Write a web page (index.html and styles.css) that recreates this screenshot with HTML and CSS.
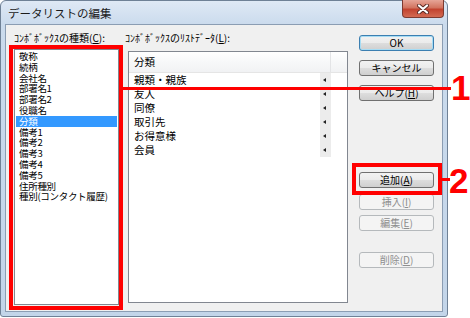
FILE: index.html
```html
<!DOCTYPE html>
<html lang="ja">
<head>
    <meta charset="UTF-8">
    <title>データリストの編集</title>
    <link rel="stylesheet" href="styles.css">
</head>
<body>
    <div class="window">
        <div class="titlebar">
            <span class="title">データリストの編集</span>
            <div class="close-btn">
                <svg width="12" height="10" viewBox="0 0 12 10">
                    <path d="M2 1.5 L10 8.5 M10 1.5 L2 8.5" stroke="#5a2a24" stroke-width="4" stroke-linecap="round"/>
                    <path d="M2 1.5 L10 8.5 M10 1.5 L2 8.5" stroke="#fff" stroke-width="2.2" stroke-linecap="round"/>
                </svg>
            </div>
        </div>

        <div class="client">
            <div class="col col-kinds">
                <div class="label">ｺﾝﾎﾞﾎﾞｯｸｽの種類(<u>C</u>):</div>
                <ul class="listbox">
                    <li>敬称</li>
                    <li>続柄</li>
                    <li>会社名</li>
                    <li>部署名1</li>
                    <li>部署名2</li>
                    <li>役職名</li>
                    <li class="selected">分類</li>
                    <li>備考1</li>
                    <li>備考2</li>
                    <li>備考3</li>
                    <li>備考4</li>
                    <li>備考5</li>
                    <li>住所種別</li>
                    <li>種別(コンタクト履歴)</li>
                </ul>
            </div>

            <div class="col col-data">
                <div class="label">ｺﾝﾎﾞﾎﾞｯｸｽのﾘｽﾄﾃﾞｰﾀ(<u>L</u>):</div>
                <div class="listview">
                    <div class="lv-header">
                        <div class="lv-head-main">分類</div>
                        <div class="lv-head-rest"></div>
                    </div>
                    <div class="lv-row"><span class="lv-text">親類・親族</span><span class="lv-arrow"></span></div>
                    <div class="lv-row"><span class="lv-text">友人</span><span class="lv-arrow"></span></div>
                    <div class="lv-row"><span class="lv-text">同僚</span><span class="lv-arrow"></span></div>
                    <div class="lv-row"><span class="lv-text">取引先</span><span class="lv-arrow"></span></div>
                    <div class="lv-row"><span class="lv-text">お得意様</span><span class="lv-arrow"></span></div>
                    <div class="lv-row"><span class="lv-text">会員</span><span class="lv-arrow"></span></div>
                </div>
            </div>

            <div class="col col-buttons">
                <button class="btn btn-default btn-ok">OK</button>
                <button class="btn btn-cancel">キャンセル</button>
                <button class="btn btn-help">ヘルプ(<u>H</u>)</button>
                <button class="btn btn-add">追加(<u>A</u>)</button>
                <button class="btn btn-insert" disabled>挿入(<u>I</u>)</button>
                <button class="btn btn-edit" disabled>編集(<u>E</u>)</button>
                <button class="btn btn-delete" disabled>削除(<u>D</u>)</button>
            </div>
        </div>
    </div>

    <!-- callout marks drawn over the dialog -->
    <div class="mark-box mark-box-1"></div>
    <div class="mark-line mark-line-1"></div>
    <div class="mark-num mark-num-1">1</div>

    <div class="mark-box mark-box-2"></div>
    <div class="mark-line mark-line-2"></div>
    <div class="mark-num mark-num-2">2</div>
</body>
</html>
```

FILE: styles.css
```css
* {
    box-sizing: border-box;
}
body {
    margin: 0;
    width: 470px;
    height: 318px;
    background: #fff;
    font-family: "Noto Sans CJK JP", "Noto Sans", sans-serif;
    color: #000;
    position: relative;
    overflow: hidden;
}
.window {
    width: 448px;
    height: 317px;
    border: 1px solid #6f8196;
    border-radius: 6px 6px 3px 3px;
    background: linear-gradient(to bottom, #dfe9f5 0, #cbdbed 23px, #c3d5e9 100%);
    display: flex;
    flex-direction: column;
}
.titlebar {
    height: 23px;
    display: flex;
    align-items: center;
    justify-content: space-between;
    padding-left: 7px;
}
.title {
    font-size: 11.5px;
    color: #1b1b1b;
}
.close-btn {
    align-self: flex-start;
    margin-top: -1px;
    margin-right: 3px;
    width: 42px;
    height: 18px;
    border: 1px solid #7d3a30;
    border-top: none;
    border-radius: 0 0 4px 4px;
    background: linear-gradient(to bottom, #e6a597 0%, #d27460 45%, #c2432f 55%, #d36a52 100%);
    display: flex;
    align-items: center;
    justify-content: center;
}
.client {
    margin: 0 4px;
    height: 288px;
    background: #f0f0f0;
    border: 1px solid #8b9db3;
    display: flex;
    padding-left: 8px;
}
.col {
    display: flex;
    flex-direction: column;
}
.col-kinds {
    width: 105px;
}
.col-data {
    width: 223px;
    margin-left: 6px;
}
.col-buttons {
    width: 75px;
    margin-left: 11px;
}
.label {
    height: 24px;
    padding-top: 5px;
    line-height: 16px;
    font-size: 10px;
    white-space: nowrap;
}
.listbox {
    list-style: none;
    margin: 0;
    padding: 1px 1px;
    height: 256px;
    background: #fff;
    border: 1px solid #828790;
    font-size: 9.5px;
    letter-spacing: -0.3px;
    overflow: hidden;
}
.listbox li {
    line-height: 10.8px;
    height: 10.8px;
    padding-left: 3px;
    white-space: nowrap;
}
.listbox li.selected {
    background: #3399ff;
    color: #fff;
}
.listview {
    margin-left: 3px;
    margin-top: 2px;
    width: 220px;
    height: 252px;
    background: #fff;
    border: 1px solid #828790;
    font-size: 10.5px;
}
.lv-header {
    display: flex;
    height: 21px;
    background: linear-gradient(to bottom, #ffffff 0%, #f7f8f9 50%, #f1f2f4 100%);
    border-bottom: 1px solid #e5e5e5;
}
.lv-head-main {
    width: 202px;
    padding-left: 5px;
    line-height: 20px;
    border-right: 1px solid #e3e4e6;
}
.lv-head-rest {
    flex: 1;
}
.lv-row {
    display: flex;
    height: 14px;
    line-height: 14px;
}
.lv-text {
    width: 191px;
    padding-left: 5px;
    white-space: nowrap;
}
.lv-arrow {
    width: 11px;
    background: #ececec;
    display: flex;
    align-items: center;
    padding-left: 3px;
}
.lv-arrow::before {
    content: "";
    border-right: 3px solid #222;
    border-top: 2.5px solid transparent;
    border-bottom: 2.5px solid transparent;
}
.btn {
    display: block;
    width: 75px;
    height: 16px;
    padding: 0;
    font-family: inherit;
    font-size: 10px;
    line-height: 14px;
    color: #000;
    border: 1px solid #707070;
    border-radius: 3px;
    background: linear-gradient(to bottom, #f2f2f2 0%, #ebebeb 48%, #dddddd 52%, #cfcfcf 100%);
}
.btn u {
    text-underline-offset: 1px;
}
.btn-default {
    border-color: #3c7fb1;
    box-shadow: inset 0 0 0 1px #a6dcf4;
}
.btn:disabled {
    color: #8e8e8e;
    border-color: #b5b9bc;
    background: #f4f4f4;
}
.btn-ok { margin-top: 10px; }
.btn-cancel { margin-top: 9px; }
.btn-help { margin-top: 9px; }
.btn-add { margin-top: 71px; }
.btn-insert { margin-top: 6px; }
.btn-edit { margin-top: 5px; }
.btn-delete { margin-top: 21px; }

.mark-box {
    position: absolute;
    border: 4px solid #f00;
}
.mark-box-1 {
    left: 9px;
    top: 45px;
    width: 114px;
    height: 265px;
}
.mark-box-2 {
    left: 352px;
    top: 163px;
    width: 90px;
    height: 32px;
}
.mark-line {
    position: absolute;
    height: 3px;
    background: #f00;
}
.mark-line-1 {
    left: 123px;
    top: 87px;
    width: 328px;
}
.mark-line-2 {
    left: 442px;
    top: 178px;
    width: 8px;
}
.mark-num {
    position: absolute;
    font-family: "Liberation Sans", Arial, sans-serif;
    font-weight: bold;
    font-size: 35px;
    line-height: 35px;
    color: #f00;
}
.mark-num-1 {
    left: 451px;
    top: 70px;
}
.mark-num-2 {
    left: 449px;
    top: 163px;
}
```
